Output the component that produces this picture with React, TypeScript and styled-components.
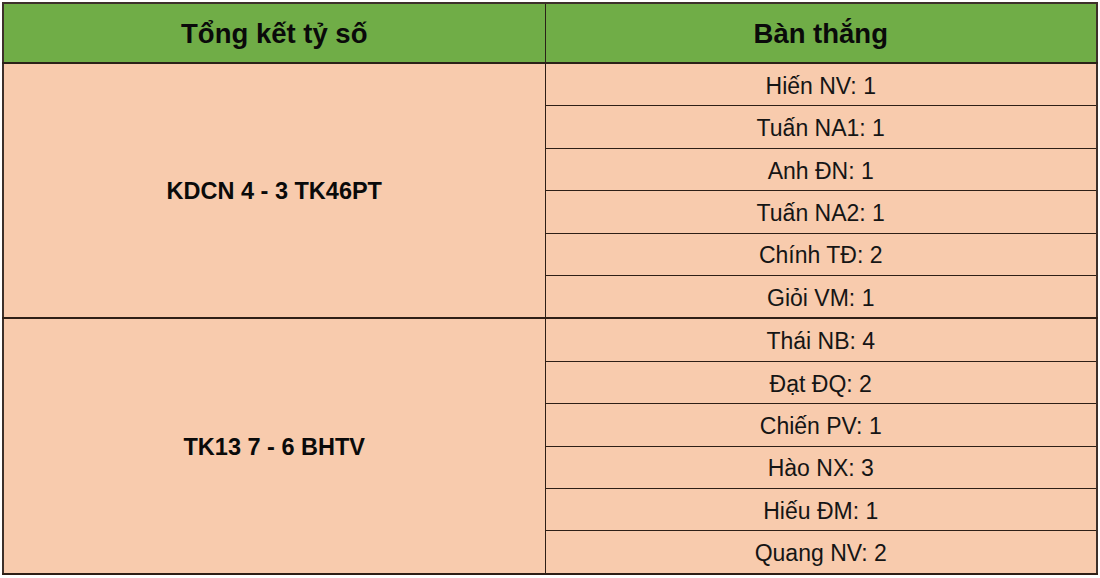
import React from "react";
import styled, { createGlobalStyle } from "styled-components";

const GlobalStyle = createGlobalStyle`
  html, body {
    margin: 0;
    padding: 0;
    background: #ffffff;
  }
  body {
    font-family: "Liberation Sans", Arial, sans-serif;
  }
`;

const Page = styled.div`
  padding: 2px 4px 0 2px;
  width: 1100px;
  box-sizing: border-box;
`;

const Table = styled.table`
  width: 1094px;
  height: 573px;
  border-collapse: collapse;
  table-layout: fixed;
  border: 2px solid #3d302a;
  font-family: "Liberation Sans", Arial, sans-serif;
`;

const HeadCell = styled.th`
  height: 56px;
  background: #70ad47;
  color: #0a0a0a;
  font-size: 27.5px;
  font-weight: 700;
  text-align: center;
  vertical-align: middle;
  border: 1px solid #2a2218;
  border-bottom-width: 2px;
  padding: 2px 0 0;
`;

const MatchCell = styled.td`
  background: #f8cbad;
  color: #0a0a0a;
  font-size: 23.5px;
  font-weight: 700;
  text-align: center;
  vertical-align: middle;
  border: 1px solid #2e1f16;
  border-bottom-width: 2px;
  padding: 2px 0 0 0;
`;

const ScorerCell = styled.td<{ $last?: boolean }>`
  background: #f8cbad;
  color: #151515;
  font-size: 23px;
  text-align: center;
  vertical-align: middle;
  border: 1px solid #2e1f16;
  border-bottom-width: ${(p) => (p.$last ? "2px" : "1px")};
  padding: 3px 0 0;
  height: 38px;
`;

type Match = { score: string; scorers: string[] };

const matches: Match[] = [
  {
    score: "KDCN 4 - 3 TK46PT",
    scorers: ["Hiến NV: 1", "Tuấn NA1: 1", "Anh ĐN: 1", "Tuấn NA2: 1", "Chính TĐ: 2", "Giỏi VM: 1"],
  },
  {
    score: "TK13 7 - 6 BHTV",
    scorers: ["Thái NB: 4", "Đạt ĐQ: 2", "Chiến PV: 1", "Hào NX: 3", "Hiếu ĐM: 1", "Quang NV: 2"],
  },
];

export default function App() {
  return (
    <Page>
      <GlobalStyle />
      <Table>
        <colgroup>
          <col style={{ width: "542px" }} />
          <col style={{ width: "552px" }} />
        </colgroup>
        <thead>
          <tr>
            <HeadCell>Tổng kết tỷ số</HeadCell>
            <HeadCell>Bàn thắng</HeadCell>
          </tr>
        </thead>
        <tbody>
          {matches.map((m) =>
            m.scorers.map((s, i) => (
              <tr key={m.score + s}>
                {i === 0 && <MatchCell rowSpan={m.scorers.length}>{m.score}</MatchCell>}
                <ScorerCell $last={i === m.scorers.length - 1}>{s}</ScorerCell>
              </tr>
            ))
          )}
        </tbody>
      </Table>
    </Page>
  );
}
